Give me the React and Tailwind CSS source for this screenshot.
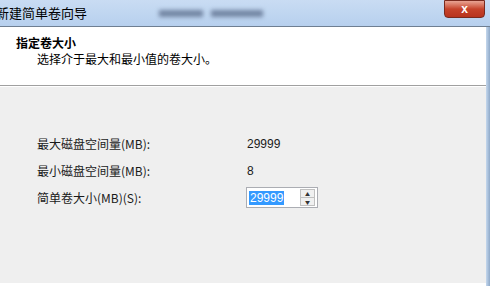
import React from 'react'

const font = { fontFamily: '"Noto Sans CJK SC", "Liberation Sans", sans-serif' }

const Row = ({ label, value }) => (
  <div className="flex items-center h-[27px]">
    <div className="w-[210px] text-[12px] text-[#1a1a1a]">{label}</div>
    <div className="text-[12px] text-[#1a1a1a]" style={{ fontFamily: '"Liberation Sans", sans-serif' }}>{value}</div>
  </div>
)

const App = () => {
  return (
    <div className="w-[490px] h-[286px] overflow-hidden flex flex-col bg-white" style={font}>
      <div className="relative h-[27px] shrink-0 flex items-center bg-gradient-to-b from-[#c9dcf3] to-[#b7d0ee] border-b border-[#6f7f92]">
        <span className="-ml-[4px] text-[13px] text-black">新建简单卷向导</span>
        <div className="ml-[72px] flex gap-[8px] items-center blur-[2px]">
          <div className="w-[44px] h-[7px] bg-[#7386a3]" />
          <div className="w-[52px] h-[7px] bg-[#7386a3]" />
        </div>
        <div className="absolute right-[5px] top-0 w-[41px] h-[18px] rounded-b-[4px] bg-gradient-to-b from-[#e8a393] via-[#c6432b] to-[#b8341e] border border-[#7a2a1e] flex items-center justify-center">
          <span className="text-white text-[12px] font-bold leading-none" style={{ fontFamily: '"Liberation Sans", sans-serif' }}>x</span>
        </div>
      </div>
      <div className="flex flex-1">
        <div className="flex-1 flex flex-col">
          <div className="h-[58px] shrink-0 bg-white pl-[16px] pt-[8px]">
            <div className="text-[12px] font-bold text-black leading-[16px]">指定卷大小</div>
            <div className="pl-[21px] text-[12px] text-black leading-[16px]">选择介于最大和最小值的卷大小。</div>
          </div>
          <div className="h-[2px] border-t border-[#a0a0a0] bg-white" />
          <div className="flex-1 bg-[#efefef] pl-[37px] pt-[43px]">
            <Row label="最大磁盘空间量(MB):" value="29999" />
            <Row label="最小磁盘空间量(MB):" value="8" />
            <div className="flex items-center h-[27px]">
              <div className="w-[209px] text-[12px] text-[#1a1a1a]">简单卷大小(MB)(S):</div>
              <div className="flex items-center w-[72px] h-[21px] bg-white border border-[#abadb3] pl-[2px] pr-[2px]">
                <span className="bg-[#3399ff] text-white text-[12px] leading-[14px] px-px" style={{ fontFamily: '"Liberation Sans", sans-serif' }}>29999</span>
                <div className="ml-auto flex flex-col w-[15px] h-[17px] border border-[#c0c0c0] bg-[#f0f0f0]">
                  <div className="flex-1 flex items-center justify-center text-[5px] leading-none text-[#333]">▲</div>
                  <div className="flex-1 flex items-center justify-center text-[5px] leading-none text-[#333] border-t border-[#c0c0c0]">▼</div>
                </div>
              </div>
            </div>
          </div>
          <div className="h-[3px] bg-white" />
        </div>
        <div className="w-[4px] bg-gradient-to-r from-[#c5d8ee] to-[#8fa9c8]" />
      </div>
    </div>
  )
}

export default App
